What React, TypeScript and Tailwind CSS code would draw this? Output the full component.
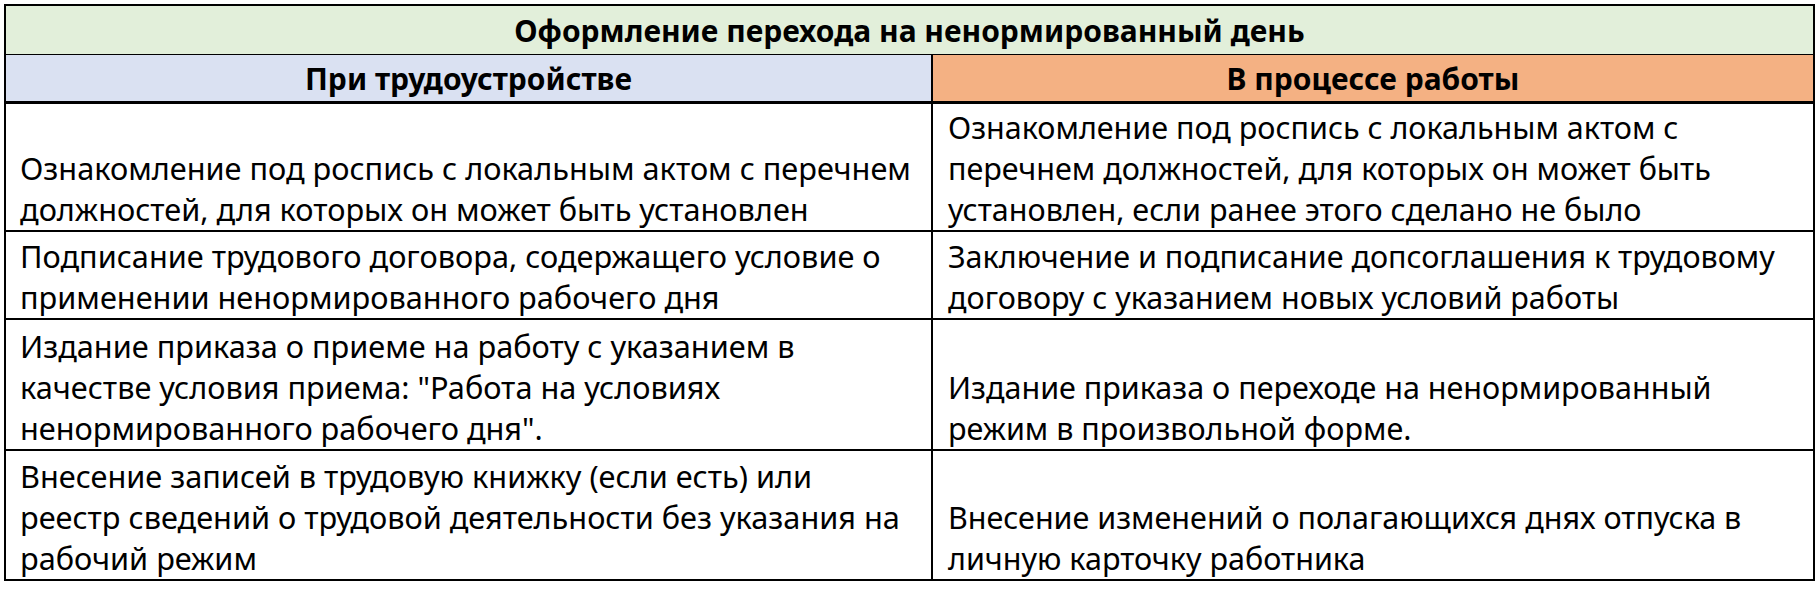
import React from 'react';

const rows: { h: string; left: string[]; right: string[] }[] = [
  {
    h: 'h-[128px] border-b-2',
    left: [
      'Ознакомление под роспись с локальным актом с перечнем',
      'должностей, для которых он может быть установлен',
    ],
    right: [
      'Ознакомление под роспись с локальным актом с',
      'перечнем должностей, для которых он может быть',
      'установлен, если ранее этого сделано не было',
    ],
  },
  {
    h: 'h-[88px] border-b-2',
    left: [
      'Подписание трудового договора, содержащего условие о',
      'применении ненормированного рабочего дня',
    ],
    right: [
      'Заключение и подписание допсоглашения к трудовому',
      'договору с указанием новых условий работы',
    ],
  },
  {
    h: 'h-[131px] border-b-2',
    left: [
      'Издание приказа о приеме на работу с указанием в',
      'качестве условия приема: "Работа на условиях',
      'ненормированного рабочего дня".',
    ],
    right: ['Издание приказа о переходе на ненормированный', 'режим в произвольной форме.'],
  },
  {
    h: 'h-[128px]',
    left: [
      'Внесение записей в трудовую книжку (если есть) или',
      'реестр сведений о трудовой деятельности без указания на',
      'рабочий режим',
    ],
    right: ['Внесение изменений о полагающихся днях отпуска в', 'личную карточку работника'],
  },
];

function Lines({ lines }: { lines: string[] }) {
  return (
    <div className="whitespace-nowrap">
      {lines.map((l, i) => (
        <div key={i}>{l}</div>
      ))}
    </div>
  );
}

export default function App() {
  return (
    <div
      className="w-[1820px] h-[590px] bg-white pl-[4px] pt-[4px] text-black"
      style={{ fontFamily: '"Noto Sans", "Open Sans", sans-serif' }}
    >
      <div className="w-[1811px] border-2 border-black">
        <div className="h-[49px] border-b border-black bg-[#e2efda] flex items-center justify-center text-[30px] font-bold">
          Оформление перехода на ненормированный день
        </div>
        <div className="h-[49px] border-b-[3px] border-black grid grid-cols-[927px_1fr] text-[30px] font-bold">
          <div className="bg-[#dae1f2] border-r-2 border-black flex items-center justify-center">
            При трудоустройстве
          </div>
          <div className="bg-[#f4b183] flex items-center justify-center">В процессе работы</div>
        </div>
        {rows.map((r, i) => (
          <div key={i} className={`${r.h} border-black grid grid-cols-[927px_1fr] text-[30.7px] leading-[41px]`}>
            <div className="border-r-2 border-black flex items-end pl-[14px]">
              <Lines lines={r.left} />
            </div>
            <div className="flex items-end pl-[15px] text-[30.5px]">
              <Lines lines={r.right} />
            </div>
          </div>
        ))}
      </div>
    </div>
  );
}
